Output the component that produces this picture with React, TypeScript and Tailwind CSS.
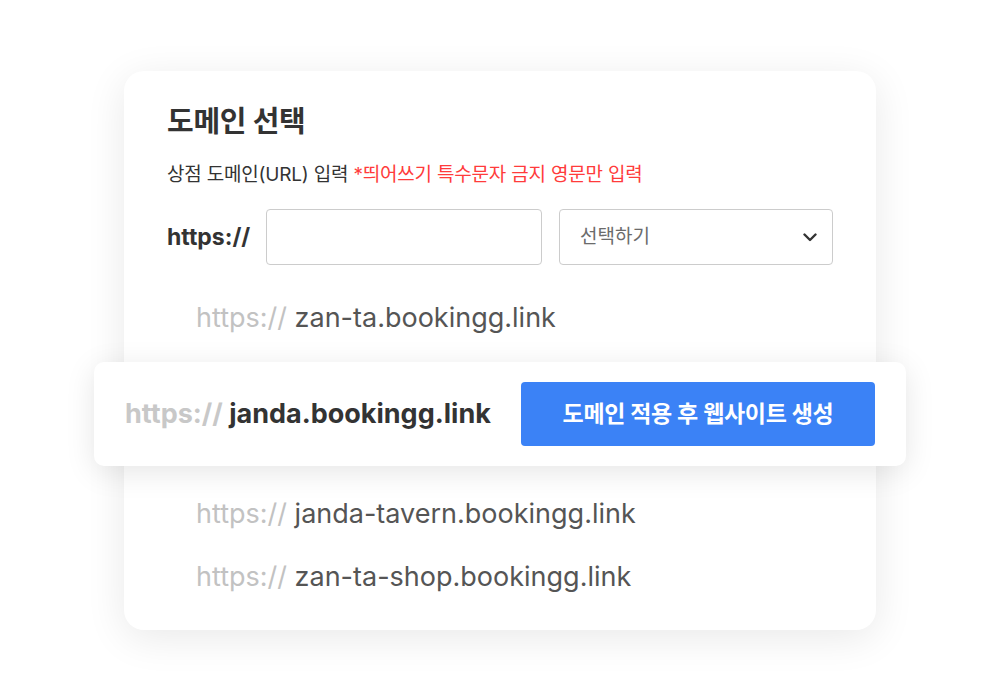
const domains = ['zan-ta.bookingg.link', 'janda-tavern.bookingg.link', 'zan-ta-shop.bookingg.link'];

function DomainItem({ name, className = '' }: { name: string; className?: string }) {
  return (
    <div className={`ml-[29px] text-[27px] leading-[32px] ${className}`}>
      <span className="text-[#c2c2c2]">https://</span> <span className="text-[#555555]">{name}</span>
    </div>
  );
}

export default function App() {
  return (
    <div
      className="min-h-[700px] w-full bg-white pt-[71px]"
      style={{ fontFamily: 'Inter, "Noto Sans CJK KR", sans-serif' }}
    >
      <div className="mx-auto w-[752px] rounded-[20px] bg-white px-[43px] pt-[33px] pb-[37px] shadow-[0_8px_40px_rgba(0,0,0,0.09)]">
        {/* Header */}
        <h1 className="text-[29px] leading-[36px] font-bold tracking-[-0.3px] text-[#333333]">도메인 선택</h1>
        <p className="mt-[23px] text-[19px] leading-[24px] tracking-[-0.2px] text-[#333333]">
          상점 도메인(URL) 입력 <span className="text-[#ff3b3b]">*띄어쓰기 특수문자 금지 영문만 입력</span>
        </p>

        {/* Input row */}
        <div className="mt-[22px] flex items-center gap-[17px]">
          <span className="w-[82px] whitespace-nowrap text-[23px] font-bold text-[#333333]">https://</span>
          <input className="h-[56px] w-[276px] rounded-[4px] border border-[#cccccc] bg-white px-4 outline-none" />
          <div className="flex h-[56px] w-[276px] items-center justify-between rounded-[4px] border border-[#cccccc] bg-white pr-[15px] pl-[20px]">
            <span className="text-[19px] text-[#6b6b6b]">선택하기</span>
            <svg width="14" height="9" viewBox="0 0 14 9" fill="none">
              <path d="M1.5 1.5 7 7l5.5-5.5" stroke="#333333" strokeWidth="2.4" strokeLinecap="round" strokeLinejoin="round" />
            </svg>
          </div>
        </div>

        {/* Domain list */}
        <DomainItem name={domains[0]} className="mt-[37px]" />

        <div className="-mx-[73px] mt-[28px] flex items-center justify-between rounded-[10px] bg-white py-[20px] pr-[31px] pl-[31px] shadow-[0_6px_30px_rgba(0,0,0,0.1)]">
          <div className="text-[27px] leading-[32px] font-bold">
            <span className="text-[#c8c8c8]">https://</span> <span className="text-[#333333]">janda.bookingg.link</span>
          </div>
          <button className="h-[64px] w-[354px] rounded-[4px] bg-[#3b82f6] text-[23px] font-bold tracking-[-0.3px] text-white">
            도메인 적용 후 웹사이트 생성
          </button>
        </div>

        <DomainItem name={domains[1]} className="mt-[32px]" />
        <DomainItem name={domains[2]} className="mt-[31px]" />
      </div>
    </div>
  );
}
